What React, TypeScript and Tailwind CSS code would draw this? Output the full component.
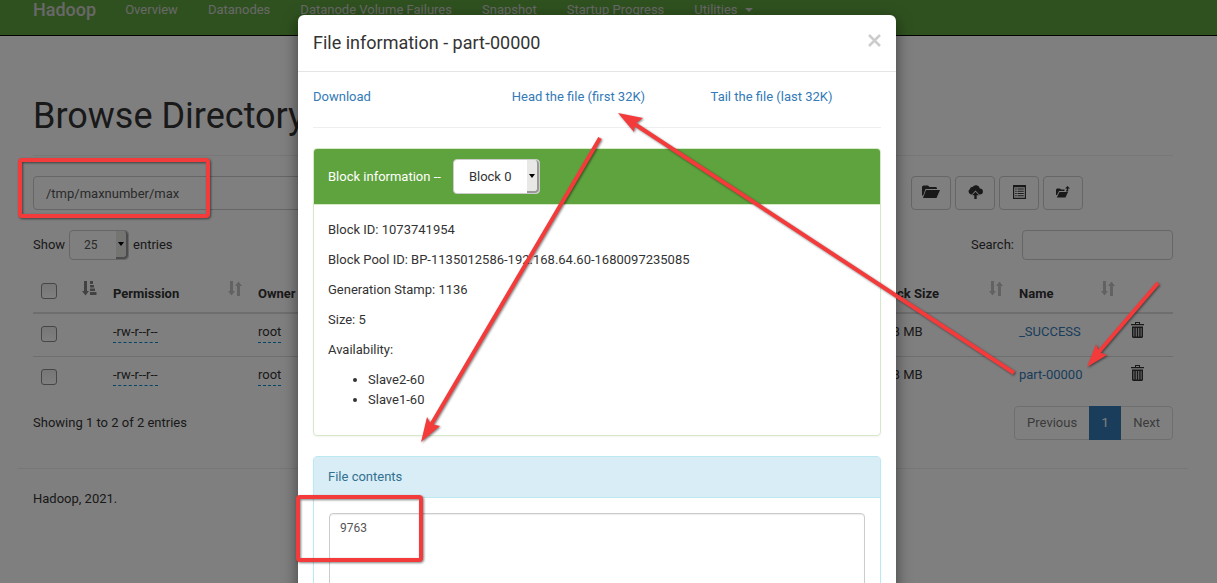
import { useState } from 'react';
import type { ReactNode } from 'react';

interface IFile {
  permission: string;
  owner: string;
  group: string;
  size: string;
  modified: string;
  replication: number;
  blockSize: string;
  name: string;
}

const files: IFile[] = [
  {
    permission: '-rw-r--r--',
    owner: 'root',
    group: 'supergroup',
    size: '0 B',
    modified: 'Mar 29 22:10',
    replication: 2,
    blockSize: '128 MB',
    name: '_SUCCESS',
  },
  {
    permission: '-rw-r--r--',
    owner: 'root',
    group: 'supergroup',
    size: '5 B',
    modified: 'Mar 29 22:10',
    replication: 2,
    blockSize: '128 MB',
    name: 'part-00000',
  },
];

const navLinks = [
  'Overview',
  'Datanodes',
  'Datanode Volume Failures',
  'Snapshot',
  'Startup Progress',
];

const columns = [
  { label: 'Permission', width: 'w-[145px]' },
  { label: 'Owner', width: 'w-[230px]' },
  { label: 'Group', width: 'w-[90px]' },
  { label: 'Size', width: 'w-[60px]' },
  { label: 'Last Modified', width: '' },
  { label: 'Replication', width: 'w-[100px]' },
  { label: 'Block Size', width: 'w-[141px]' },
  { label: 'Name', width: 'w-[112px]' },
];

const SortIcon = () => (
  <svg
    className="absolute right-2 bottom-4 text-[#c4c4c4]"
    width="14"
    height="15"
    viewBox="0 0 14 15"
    fill="currentColor"
    aria-hidden="true"
  >
    <path d="M2 0h3v10h2l-3.500 4.500L0 10h2zM9 15h3V5h2l-3.500-4.500L7 5h2z" />
  </svg>
);

const SortedIcon = () => (
  <svg
    className="absolute right-2 bottom-4 text-[#858585]"
    width="15"
    height="15"
    viewBox="0 0 15 15"
    fill="currentColor"
    aria-hidden="true"
  >
    <path d="M2 0h3v10h2l-3.500 4.500L0 10h2zM8 0h3v3H8zM8 4h4v2.500H8zM8 7.500h5V10H8zM8 11h6.500v3H8z" />
  </svg>
);

const FolderOpenIcon = () => (
  <svg width="18" height="14" viewBox="0 0 18 14" fill="currentColor" aria-hidden="true">
    <path d="M0 10V1.500L1.500 0.500H6L7.500 2H14l1 1v1H3.500L1 11z" />
    <path d="M4 5h14l-3.500 8H1z" />
  </svg>
);

const CloudUploadIcon = () => (
  <svg width="15" height="14" viewBox="0 0 15 14" fill="currentColor" aria-hidden="true">
    <path d="M3 9.500A3 3 0 0 1 2 4 2.200 2.200 0 0 1 4.500 2a4 4 0 0 1 7.300 1.500A3 3 0 0 1 12 9.500h-.8L7.500 5.500 3.800 9.500z" />
    <path d="M7.500 6.700 11 10.200H8.700V14H6.300v-3.800H4z" />
  </svg>
);

const ListIcon = () => (
  <svg width="13" height="14" viewBox="0 0 13 14" fill="currentColor" aria-hidden="true">
    <path
      fillRule="evenodd"
      d="M0 0h13v14H0zM1.200 2.200v10.600h10.600V2.200z"
    />
    <path d="M2.200 3.500h1.500v1H2.200zM2.200 5.700h1.500v1H2.200zM2.200 8h1.500v1H2.200zM2.200 10.300h1.500v1H2.200zM4.500 3.500h6.300v1H4.500zM4.500 5.700h6.300v1H4.500zM4.500 8h6.300v1H4.500zM4.500 10.300h6.300v1H4.500z" />
  </svg>
);

const FolderUpIcon = () => (
  <svg width="14" height="12" viewBox="0 0 14 12" fill="currentColor" aria-hidden="true">
    <path d="M0 9V3.500l1-1h3l1 1h3.500V5H3L1 9z" />
    <path d="M3.500 6H12l-2.500 5.500H.8z" />
    <path d="M11.500 0 14 2.500h-1.800v3H10V4.300h.8V2.500H9z" />
  </svg>
);

const TrashIcon = () => (
  <svg width="13" height="16" viewBox="0 0 13 16" fill="currentColor" aria-hidden="true">
    <path
      fillRule="evenodd"
      d="M4 0h5v2h4v1.300H0V2h4zM5 1v1h3V1zM1 4.500h11V15l-1 1H2l-1-1zM2.500 6v8.500h.8V6zM4.800 6v8.500h.9V6zM7.300 6v8.500h.9V6zM9.700 6v8.500h.8V6z"
    />
  </svg>
);

const ToolButton = ({ label, children }: { label: string; children: ReactNode }) => (
  <button
    type="button"
    aria-label={label}
    className="flex h-[34px] w-10 items-center justify-center rounded border border-[#ccc] pb-0.5 text-[#333]"
  >
    {children}
  </button>
);

// square drop-down handle drawn over the right end of a select
const SelectHandle = () => (
  <span className="pointer-events-none absolute inset-y-px right-px flex w-3 items-center justify-center rounded-r-sm border-r-2 border-b-2 border-[#999] bg-[#e8e8e7]">
    <span className="border-x-3 border-t-4 border-x-transparent border-t-black" />
  </span>
);

const Checkbox = ({ label }: { label: string }) => (
  <input
    type="checkbox"
    aria-label={label}
    className="block size-4 appearance-none rounded-[3px] border border-[#8c8c8c] bg-linear-to-b from-[#eee] to-white"
  />
);

const Annotations = () => (
  <svg
    className="pointer-events-none absolute inset-0 h-full w-full drop-shadow-[1px_1px_1px_rgba(0,0,0,0.5)]"
    fill="none"
    stroke="#f43b3b"
    strokeWidth="4"
    aria-hidden="true"
  >
    <rect x="20" y="160" width="188" height="56" rx="2" />
    <rect x="298" y="497" width="123" height="63" rx="2" />
    <path d="M600 138 431 425M1014 373 633 123M1158 283 1097 354" />
    <g fill="#f43b3b" stroke="none">
      <path d="M421 442 427 417 431 424 440 426z" />
      <path d="M618 113 643 118 635 124 634 132z" />
      <path d="M1087 367 1096 344 1099 352 1107 355z" />
    </g>
  </svg>
);

const FileModal = () => {
  const [block, setBlock] = useState('Block 0');

  return (
    <div className="absolute inset-0 overflow-hidden bg-black/50 pt-[15px] pr-[23px]">
      <div
        role="dialog"
        aria-labelledby="modal-title"
        className="mx-auto max-w-[598px] rounded-md bg-white shadow-[0_5px_15px_rgba(0,0,0,0.5)]"
      >
        <div className="flex items-start justify-between border-b border-[#e5e5e5] p-[15px]">
          <h4 id="modal-title" className="text-lg leading-[26px]">
            File information - part-00000
          </h4>
          <button
            type="button"
            aria-label="Close"
            className="flex h-5 items-center text-[#ccc]"
          >
            <svg width="13" height="13" viewBox="0 0 13 13" stroke="currentColor" strokeWidth="2.500">
              <path d="M1 1l11 11M12 1L1 12" />
            </svg>
          </button>
        </div>
        <div className="p-[15px]">
          <div className="flex text-[#337ab7]">
            <a href="#download" className="w-[35%]">
              Download
            </a>
            <a href="#head" className="w-[35%]">
              Head the file (first 32K)
            </a>
            <a href="#tail">Tail the file (last 32K)</a>
          </div>
          <hr className="my-5 border-[#eee]" />

          <section className="mb-5 rounded border border-[#d6e9c6] shadow-xs">
            <div className="flex items-center gap-3 rounded-t-[3px] border-b border-[#d6e9c6] bg-[#5fa33e] px-3.5 py-2.5 text-white">
              <label htmlFor="block">Block information --</label>
              <span className="relative">
                <select
                  id="block"
                  className="block h-[35px] w-[87px] appearance-none rounded border border-[#ccc] bg-white pl-[15px] text-[#333]"
                  value={block}
                  onChange={(e) => setBlock(e.target.value)}
                >
                  <option>Block 0</option>
                </select>
                <SelectHandle />
              </span>
            </div>
            <div className="px-3.5 pt-[15px] pb-[25px]">
              <div className="space-y-2.5">
                <p>Block ID: 1073741954</p>
                <p>Block Pool ID: BP-1135012586-192.168.64.60-1680097235085</p>
                <p>Generation Stamp: 1136</p>
                <p>Size: 5</p>
                <p>Availability:</p>
                <ul className="list-disc pl-10">
                  <li>Slave2-60</li>
                  <li>Slave1-60</li>
                </ul>
              </div>
            </div>
          </section>

          <section className="rounded border border-[#bce8f1] shadow-xs">
            <div className="border-b border-[#bce8f1] bg-[#d9edf7] px-3.5 py-2.5 text-[#31708f]">
              <label htmlFor="contents">File contents</label>
            </div>
            <div className="p-[15px]">
              <textarea
                id="contents"
                className="block h-48 w-full resize-none rounded-sm border border-[#ccc] px-2.5 py-1 text-xs leading-5 text-[#555] shadow-[inset_0_1px_1px_rgba(0,0,0,0.075)]"
                defaultValue="9763"
              />
            </div>
          </section>
        </div>
      </div>
    </div>
  );
};

const App = () => {
  const [path, setPath] = useState('/tmp/maxnumber/max');

  return (
    <div className="relative h-screen overflow-hidden bg-white font-[Roboto,sans-serif] text-[13px] leading-5 text-[#333]">
      <header className="border-b border-black bg-[#5fa33e] pr-[11px] pb-[15px]">
        <nav className="mx-auto flex h-5 max-w-[1170px] items-center px-[15px] text-[#d0d0d0]">
          <a href="#home" className="mr-[29px] text-lg font-medium">
            Hadoop
          </a>
          <div className="flex gap-[30px]">
            {navLinks.map((link) => (
              <a href="#nav" key={link}>
                {link}
              </a>
            ))}
            <a href="#utilities" className="flex items-center gap-2">
              Utilities
              <span className="border-x-4 border-t-4 border-x-transparent" />
            </a>
          </div>
        </nav>
      </header>

      <div className="pr-[11px]">
        <main className="mx-auto max-w-[1170px] px-[15px] pt-[60px]">
          <h1 className="border-b border-[#eee] pb-[19px] text-4xl leading-10">
            Browse Directory
          </h1>
          <form
            className="mt-5 flex gap-1 pr-[90px]"
            onSubmit={(e) => e.preventDefault()}
          >
            <input
              type="text"
              aria-label="Directory"
              className="mr-4 h-[34px] min-w-0 flex-1 rounded border border-[#ccc] px-3 text-[#555]"
              value={path}
              onChange={(e) => setPath(e.target.value)}
            />
            <ToolButton label="Create directory">
              <FolderOpenIcon />
            </ToolButton>
            <ToolButton label="Upload files">
              <CloudUploadIcon />
            </ToolButton>
            <ToolButton label="Cut and paste">
              <ListIcon />
            </ToolButton>
            <ToolButton label="Parent directory">
              <FolderUpIcon />
            </ToolButton>
          </form>

          <div className="mt-5 flex items-center justify-between">
            <div className="flex items-center gap-1">
              <label htmlFor="length">Show</label>
              <span className="relative">
                <select
                  id="length"
                  className="block h-[30px] w-[60px] appearance-none rounded-sm border border-[#ccc] pl-3.5 text-xs text-[#555]"
                >
                  <option>25</option>
                </select>
                <SelectHandle />
              </span>
              <span>entries</span>
            </div>
            <label className="flex items-center gap-2">
              Search:
              <input
                type="search"
                className="h-[30px] w-[151px] rounded-sm border border-[#ccc] px-2"
              />
            </label>
          </div>

          <table className="w-full table-fixed text-left">
            <thead>
              <tr className="border-b-2 border-[#ddd]">
                <th className="w-[33px] pt-[23px] pb-[13px] pl-2">
                  <Checkbox label="Select all" />
                </th>
                <th className="relative w-[39px]">
                  <SortedIcon />
                </th>
                {columns.map((col) => (
                  <th
                    key={col.label}
                    className={`relative px-2 pb-2 align-bottom ${col.width}`}
                  >
                    {col.label}
                    <SortIcon />
                  </th>
                ))}
                <th className="w-[50px]" aria-label="Delete" />
              </tr>
            </thead>
            <tbody>
              {files.map((file) => (
                <tr
                  key={file.name}
                  className="h-[43px] border-t border-[#ddd] align-top"
                >
                  <td className="pt-3 pl-2">
                    <Checkbox label={file.name} />
                  </td>
                  <td />
                  <td className="px-2 pt-2">
                    <span className="inline-block border-b border-dashed border-[#0088cc]">
                      {file.permission}
                    </span>
                  </td>
                  <td className="px-2 pt-2">
                    <span className="inline-block border-b border-dashed border-[#0088cc]">
                      {file.owner}
                    </span>
                  </td>
                  <td className="px-2 pt-2">{file.group}</td>
                  <td className="px-2 pt-2">{file.size}</td>
                  <td className="px-2 pt-2">{file.modified}</td>
                  <td className="px-2 pt-2">{file.replication}</td>
                  <td className="px-2 pt-2">{file.blockSize}</td>
                  <td className="px-2 pt-2 text-[#337ab7]">
                    <a href="#file">{file.name}</a>
                  </td>
                  <td className="px-2 pt-2">
                    <button type="button" aria-label="Delete" className="block">
                      <TrashIcon />
                    </button>
                  </td>
                </tr>
              ))}
            </tbody>
          </table>

          <div className="mt-[7px] flex items-center justify-between">
            <p>Showing 1 to 2 of 2 entries</p>
            <div className="flex h-[34px] items-stretch rounded border border-[#ddd] text-[#777]">
              <button type="button" className="px-3">
                Previous
              </button>
              <button type="button" className="-my-px w-8 bg-[#337ab7] text-white">
                1
              </button>
              <button type="button" className="px-3">
                Next
              </button>
            </div>
          </div>
        </main>
        <footer className="mx-auto mt-7 max-w-[1170px] border-t border-[#eee] px-[15px] pt-5">
          Hadoop, 2021.
        </footer>
      </div>

      <FileModal />
      <Annotations />
    </div>
  );
};

export default App;
